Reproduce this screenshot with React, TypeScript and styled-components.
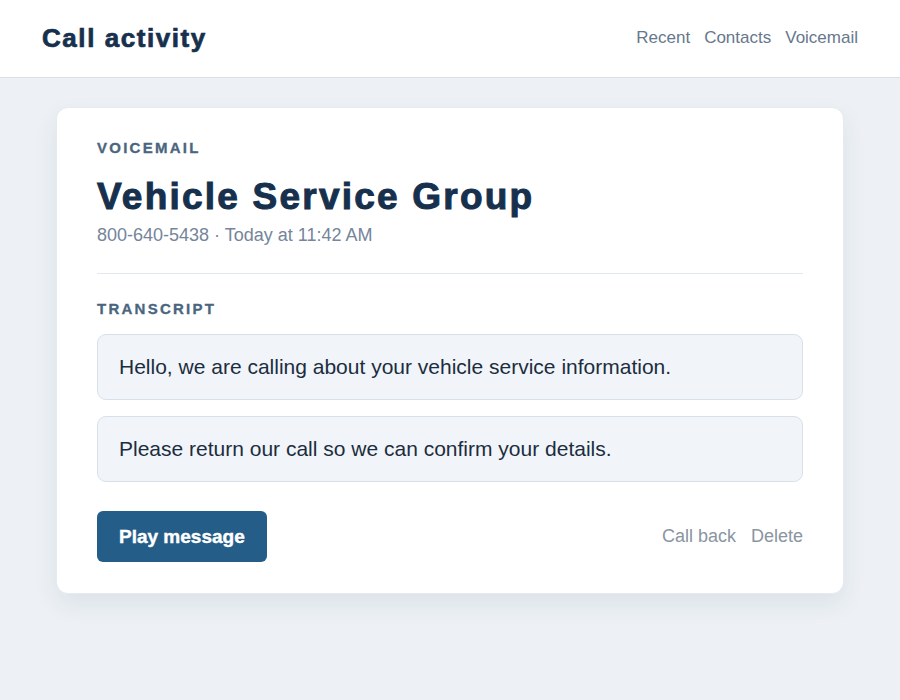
import React from "react";
import styled, { createGlobalStyle } from "styled-components";

const GlobalStyle = createGlobalStyle`
  * {
    box-sizing: border-box;
  }

  body {
    margin: 0;
    background: #edf1f5;
    font-family: "Liberation Sans", Arial, sans-serif;
    color: #16304d;
  }
`;

const Header = styled.header`
  display: flex;
  justify-content: space-between;
  align-items: center;
  height: 78px;
  padding: 0 42px;
  background: #ffffff;
  border-bottom: 1px solid #d9e0e7;
`;

const AppTitle = styled.h1`
  margin: 0;
  font-size: 26px;
  letter-spacing: 0.06em;
  font-weight: bold;
  color: #16304d;
  -webkit-text-stroke: 0.7px #16304d;
`;

const Nav = styled.nav`
  display: flex;
  gap: 14px;
  margin-top: -2px;
`;

const NavLink = styled.a`
  font-size: 17px;
  color: #66788c;
  text-decoration: none;
`;

const Main = styled.main`
  padding: 29px 56px 40px;
`;

const Card = styled.section`
  background: #ffffff;
  border: 1px solid #e6ebf0;
  border-radius: 12px;
  padding: 31px 40px 31px;
  box-shadow: 0 10px 24px rgba(30, 55, 85, 0.08);
`;

const Eyebrow = styled.div`
  font-size: 15px;
  line-height: 18px;
  font-weight: bold;
  letter-spacing: 0.15em;
  text-transform: uppercase;
  color: #4a6580;
  -webkit-text-stroke: 0.3px #4a6580;
`;

const Caller = styled.h2`
  margin: 18px 0 0;
  font-size: 37px;
  line-height: 44px;
  letter-spacing: 0.06em;
  font-weight: bold;
  color: #16304d;
  -webkit-text-stroke: 1px #16304d;
`;

const Meta = styled.div`
  margin-top: 5px;
  font-size: 18px;
  line-height: 22px;
  color: #75859a;
`;

const Divider = styled.hr`
  margin: 27px 0 26px;
  border: 0;
  border-top: 1px solid #e3e8ee;
`;

const Transcript = styled.div`
  display: flex;
  flex-direction: column;
  gap: 16px;
  margin-top: 16px;
`;

const Line = styled.p`
  margin: 0;
  padding: 17px 21px;
  font-size: 21px;
  line-height: 30px;
  color: #1c2d40;
  background: #f1f5f9;
  border: 1px solid #d8e1ea;
  border-radius: 9px;
`;

const Actions = styled.div`
  display: flex;
  justify-content: space-between;
  align-items: center;
  margin-top: 29px;
`;

const PlayButton = styled.button`
  height: 51px;
  padding: 0 22px;
  border: 0;
  border-radius: 6px;
  background: #245d87;
  color: #ffffff;
  font-family: inherit;
  font-size: 19px;
  font-weight: bold;
  -webkit-text-stroke: 0.4px #ffffff;
  cursor: pointer;
`;

const SecondaryGroup = styled.div`
  display: flex;
  gap: 15px;
`;

const TextButton = styled.button`
  padding: 0;
  border: 0;
  background: none;
  font-family: inherit;
  font-size: 18px;
  color: #8a95a2;
  cursor: pointer;
`;

const transcript = [
  "Hello, we are calling about your vehicle service information.",
  "Please return our call so we can confirm your details.",
];

const App: React.FC = () => {
  return (
    <>
      <GlobalStyle />
      <Header>
        <AppTitle>Call activity</AppTitle>
        <Nav>
          <NavLink href="#">Recent</NavLink>
          <NavLink href="#">Contacts</NavLink>
          <NavLink href="#">Voicemail</NavLink>
        </Nav>
      </Header>
      <Main>
        <Card>
          <Eyebrow>Voicemail</Eyebrow>
          <Caller>Vehicle Service Group</Caller>
          <Meta>800-640-5438 · Today at 11:42 AM</Meta>
          <Divider />
          <Eyebrow>Transcript</Eyebrow>
          <Transcript>
            {transcript.map(line => (
              <Line key={line}>{line}</Line>
            ))}
          </Transcript>
          <Actions>
            <PlayButton>Play message</PlayButton>
            <SecondaryGroup>
              <TextButton>Call back</TextButton>
              <TextButton>Delete</TextButton>
            </SecondaryGroup>
          </Actions>
        </Card>
      </Main>
    </>
  );
};

export default App;
